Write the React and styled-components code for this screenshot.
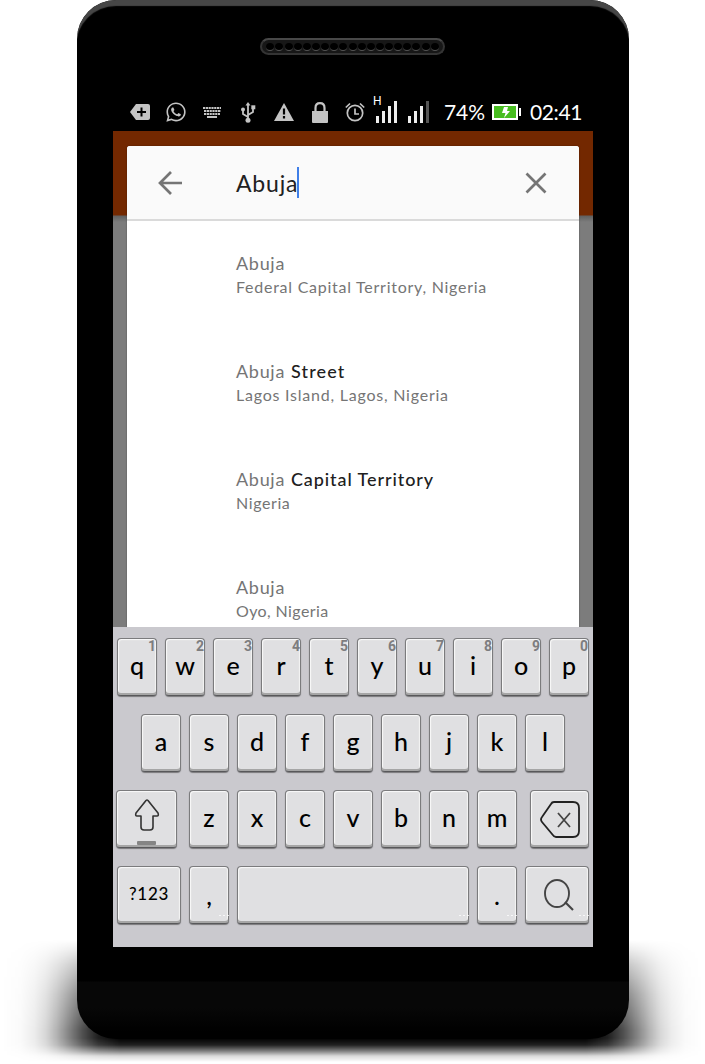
import React from "react";
import styled, { createGlobalStyle } from "styled-components";
import { FaWhatsapp } from "react-icons/fa";

const GlobalStyle = createGlobalStyle`
  * { box-sizing: border-box; }
  body { margin: 0; background: #fff; font-family: Lato, "Open Sans", sans-serif; }
  svg { display: block; flex: none; }
`;

const Stage = styled.main`
  position: relative;
  width: 705px;
  height: 1064px;
  padding-left: 77px;
  overflow: hidden;
`;

const GroundShadow = styled.div`
  position: absolute;
  left: 0;
  top: 934px;
  width: 705px;
  height: 130px;
  background: linear-gradient(to right, transparent 2px, rgba(0,0,0,.02) 20px, rgba(0,0,0,.07) 34px, rgba(0,0,0,.16) 46px, rgba(0,0,0,.3) 57px, rgba(0,0,0,.47) 68px, rgba(0,0,0,.68) 82px, rgba(0,0,0,.88) 98px, #000 120px, #000 586px, rgba(0,0,0,.88) 608px, rgba(0,0,0,.68) 624px, rgba(0,0,0,.47) 638px, rgba(0,0,0,.3) 649px, rgba(0,0,0,.16) 660px, rgba(0,0,0,.07) 672px, rgba(0,0,0,.02) 686px, transparent 703px);
  mask-image: linear-gradient(to bottom, transparent 6px, rgba(0,0,0,.13) 16px, rgba(0,0,0,.34) 30px, rgba(0,0,0,.7) 60px, #000 96px, #000 104px, rgba(0,0,0,.87) 111px, rgba(0,0,0,.5) 117px, rgba(0,0,0,.15) 122px, transparent 128px);
`;

const Phone = styled.div`
  position: relative;
  width: 552px;
  height: 1039px;
  border-radius: 39px;
  background: linear-gradient(to bottom, #000 981px, #070707 982px, #070707 1008px, #000 1032px);
  box-shadow: inset 0 7px 1px -1px #464646;
  display: flex;
  flex-direction: column;
  align-items: center;
`;

const Speaker = styled.div`
  margin: 38px 1px 0 0;
  width: 185px;
  height: 17px;
  flex: none;
  border-radius: 9px;
  border: 2px solid #343434;
  border-top-color: #484848;
  background: #171717;
  display: flex;
  justify-content: center;
  align-items: center;
  gap: 1.15px;
`;

const Hole = styled.i`
  width: 8px;
  height: 8px;
  border-radius: 50%;
  background: #000;
  border-bottom: 1px solid #555;
`;

const Screen = styled.div`
  margin-top: 38px;
  width: 480px;
  height: 854px;
  flex: none;
  display: flex;
  flex-direction: column;
`;

const StatusBar = styled.header`
  height: 38px;
  flex: none;
  padding-left: 9px;
  display: flex;
  align-items: center;
  color: #fff;
`;

const StatusSlot = styled.span`
  width: ${(p) => p.$w || 36}px;
  flex: none;
  display: flex;
  justify-content: center;
  color: #c4c4c4;
`;

const StatusText = styled.span`
  width: ${(p) => p.$w}px;
  flex: none;
  margin-left: ${(p) => p.$gap}px;
  font-size: 21px;
  line-height: 38px;
  letter-spacing: ${(p) => p.$track}px;
  white-space: nowrap;
`;

const AppArea = styled.section`
  height: 496px;
  flex: none;
  padding: 15px 14px 0;
  background: linear-gradient(to bottom, #732800 84px, #606060 85px, #7c7c7c 91px);
  overflow: hidden;
`;

const SearchCard = styled.div`
  height: 490px;
  border-radius: 3px;
  background: #fff;
  box-shadow: 0 0 2px rgba(0, 0, 0, 0.35);
  overflow: hidden;
`;

const SearchHeader = styled.div`
  height: 75px;
  padding: 0 32px 0 31px;
  background: #fafafa;
  border-bottom: 2px solid #dadada;
  display: flex;
  align-items: center;
`;

const Query = styled.span`
  flex: 1;
  margin-left: 54px;
  display: flex;
  align-items: center;
  font-size: 23px;
  letter-spacing: 0.8px;
  color: #212121;
`;

const Caret = styled.i`
  width: 2px;
  height: 31px;
  margin-left: -1.5px;
  background: #3f7fe8;
`;

const Result = styled.article`
  height: 108px;
  padding: 30px 0 0 109px;
  color: #757575;
  white-space: nowrap;
`;

const Place = styled.h2`
  margin: 0;
  font-size: 18px;
  line-height: 24px;
  font-weight: 400;
  letter-spacing: 0.7px;
  b { margin-left: 0.6px; color: #202020; font-weight: 500; letter-spacing: ${(p) => p.$track}px; }
`;

const Region = styled.p`
  margin: 0;
  font-size: 16px;
  line-height: 23px;
  letter-spacing: ${(p) => p.$track}px;
`;

const Keyboard = styled.section`
  height: 320px;
  flex: none;
  padding-top: 11px;
  background: #cac9ce;
  display: flex;
  flex-direction: column;
  gap: 18px;
`;

const KeyRow = styled.div`
  height: 58px;
  display: flex;
  gap: 8px;
  padding-left: ${(p) => p.$inset}px;
`;

const Key = styled.div`
  position: relative;
  width: ${(p) => p.$w || 40}px;
  height: 58px;
  flex: none;
  margin-left: ${(p) => p.$ml || 0}px;
  padding-bottom: ${(p) => p.$lift ?? 3}px;
  border: 1px solid #7b7b7d;
  border-bottom-color: #58585a;
  border-radius: 4px;
  background: #e0e0e2;
  box-shadow: inset 0 -2px 0 #a6a6a6, inset 1px 1px 1px #fafafa, inset -1px 0 1px #f4f4f4, 0 1px 1px rgba(0, 0, 0, 0.4);
  display: flex;
  align-items: center;
  justify-content: center;
  color: #000;
  font-size: ${(p) => p.$size || 25}px;
  font-weight: 500;
  letter-spacing: ${(p) => p.$track || 0}px;
  line-height: 1;
`;

const Alt = styled.small`
  position: absolute;
  top: 0;
  right: 0;
  font: 700 14px/15px Roboto, sans-serif;
  color: #7d7d7f;
`;

const MoreDots = styled.small`
  position: absolute;
  right: -1px;
  bottom: 7px;
  width: 10px;
  height: 1px;
  opacity: 0.75;
  background: repeating-linear-gradient(to right, #fff 0 2px, transparent 2px 4px);
`;

const SignalBars = ({ weak }) => (
  <svg width="22" height="24" viewBox="0 0 22 24" fill="#eee">
    <path d="M0 16h3v7H0zM6 11h3v12H6zM12 6h3v17h-3z" />
    <path d="M18 1h3v22h-3z" fill={weak ? "#555" : "#eee"} />
  </svg>
);

const SignalGroup = styled.span`
  position: relative;
  width: 22px;
  flex: none;
  margin-left: ${(p) => p.$gap}px;
`;

const NetType = styled.small`
  position: absolute;
  left: -3px;
  top: -5px;
  font: 12px/12px Roboto, sans-serif;
`;

const StatusIcons = () => (
  <>
    <StatusSlot>
      <svg width="20" height="16" viewBox="0 0 20 16"><path d="M6 0h12q2 0 2 2v12q0 2-2 2H6L0 8z" fill="currentColor" /><path d="M11.5 3.5v9M7 8h9" stroke="#000" strokeWidth="2" /></svg>
    </StatusSlot>
    <StatusSlot><FaWhatsapp size={22} /></StatusSlot>
    <StatusSlot>
      <svg width="18" height="12" viewBox="0 0 18 12" stroke="currentColor" strokeWidth="2"><path d="M0 2h18M1 5h17M1 8h16" strokeDasharray="2.2 .6" /><path d="M4 11h10" /></svg>
    </StatusSlot>
    <StatusSlot>
      <svg width="16" height="21" viewBox="0 0 16 21" fill="none" stroke="currentColor" strokeWidth="1.8"><path d="M8 18V2M8 15l-5-3V8M8 13l5-3V6" /><path d="M5.500 3.500 8 0l2.500 3.500z" fill="currentColor" stroke="none" /><circle cx="8" cy="18.300" r="2.500" fill="currentColor" stroke="none" /><circle cx="3" cy="7.500" r="2" fill="currentColor" stroke="none" /><path d="M11.300 3.300h4v4h-4z" fill="currentColor" stroke="none" /></svg>
    </StatusSlot>
    <StatusSlot>
      <svg width="20" height="18" viewBox="0 0 20 18"><path d="M10 0l10 18H0z" fill="currentColor" /><path d="M10 5.500v6M10 13v2.400" stroke="#000" strokeWidth="2.200" /></svg>
    </StatusSlot>
    <StatusSlot>
      <svg width="18" height="21" viewBox="0 0 18 21"><path d="M1 9h16v11q0 1-1 1H2q-1 0-1-1z" fill="currentColor" /><path d="M4.500 9.500V6q0-4.800 4.500-4.800T13.500 6v3.500" fill="none" stroke="currentColor" strokeWidth="2.200" /></svg>
    </StatusSlot>
    <StatusSlot $w={34}>
      <svg width="20" height="20" viewBox="0 0 20 20" fill="none" stroke="currentColor" strokeWidth="1.700"><circle cx="10" cy="11" r="7.700" /><path d="M10 6.500V12h4M.8 5.500 5 1.500M19.200 5.500 15 1.500" /></svg>
    </StatusSlot>
  </>
);

const BackArrow = () => (
  <svg width="24" height="24" viewBox="0 0 24 24" fill="none" stroke="#757575" strokeWidth="2.700"><path d="M24 12H2M13 1 2 12l11 11" /></svg>
);

const ClearIcon = () => (
  <svg width="22" height="22" viewBox="0 0 22 22" stroke="#757575" strokeWidth="2.700"><path d="M1.500 1.500l19 19M20.500 1.500l-19 19" /></svg>
);

const ShiftIcon = () => (
  <svg width="26" height="46" viewBox="0 0 26 46" fill="none" stroke="#333" strokeWidth="1.600" strokeLinejoin="round"><path d="M12 1.500Q13 .5 14 1.500L24 14q1 3-1 3h-4v11q0 3-3 3h-6q-3 0-3-3V17H3q-2 0-1-3z" /><rect x="3" y="42" width="19" height="4" rx="1" fill="#858585" stroke="none" /></svg>
);

const DeleteIcon = () => (
  <svg width="40" height="37" viewBox="0 0 40 37" fill="none" stroke="#222" strokeWidth="1.800"><path d="M14 1h19q6 0 6 6v23q0 6-6 6H16q-2 0-4-3L2 21q-2-2.500 0-5L11 3q1-2 3-2z" /><path d="M18 12l12 14M30 12 18 26" stroke="#444" /></svg>
);

const SearchIcon = () => (
  <svg width="30" height="32" viewBox="0 0 30 32" fill="none" stroke="#444" strokeWidth="1.900"><ellipse cx="13" cy="14.500" rx="12" ry="13.500" /><path d="M21 23l8 8" strokeWidth="2.200" /></svg>
);

const IconNudge = styled.span`
  padding: ${(p) => p.$pad};
`;

const results = [
  { region: "Federal Capital Territory, Nigeria", track: 0.74 },
  { rest: "Street", region: "Lagos Island, Lagos, Nigeria", track: 0.77, restTrack: 1.15 },
  { rest: "Capital Territory", region: "Nigeria", track: 0.6, restTrack: 0.92 },
  { region: "Oyo, Nigeria", track: 0.4 },
];

export default function App() {
  return (
    <Stage>
      <GlobalStyle />
      <GroundShadow />
      <Phone>
        <Speaker>{Array.from({ length: 19 }, (_, i) => <Hole key={i} />)}</Speaker>
        <Screen>
          <StatusBar>
            <StatusIcons />
            <SignalGroup $gap={4}><NetType>H</NetType><SignalBars /></SignalGroup>
            <SignalGroup $gap={10}><SignalBars weak /></SignalGroup>
            <StatusText $w={42} $gap={14} $track={-0.1}>74%</StatusText>
            <IconNudge $pad="0 0 0 6px">
              <svg width="29" height="16" viewBox="0 0 29 16"><rect x="1" y="1" width="24" height="14" fill="#48bd20" stroke="#fff" strokeWidth="2" /><path d="M27 4h2v8h-2z" fill="#fff" /><path d="M12 3h4l-1 4h3l-6 7 1.500-5H10z" fill="#fff" /></svg>
            </IconNudge>
            <StatusText $w={52} $gap={9} $track={-0.4}>02:41</StatusText>
          </StatusBar>
          <AppArea>
            <SearchCard>
              <SearchHeader>
                <BackArrow />
                <Query>Abuja<Caret /></Query>
                <ClearIcon />
              </SearchHeader>
              {results.map((r) => (
                <Result key={r.region}>
                  <Place $track={r.restTrack}>Abuja {r.rest && <b>{r.rest}</b>}</Place>
                  <Region $track={r.track}>{r.region}</Region>
                </Result>
              ))}
            </SearchCard>
          </AppArea>
          <Keyboard>
            <KeyRow $inset={4}>
              {[..."qwertyuiop"].map((c, i) => <Key key={c}>{c}<Alt>{(i + 1) % 10}</Alt></Key>)}
            </KeyRow>
            <KeyRow $inset={28}>{[..."asdfghjkl"].map((c) => <Key key={c}>{c}</Key>)}</KeyRow>
            <KeyRow $inset={3}>
              <Key $w={61} $lift={0}><IconNudge $pad="5px 0 0"><ShiftIcon /></IconNudge></Key>
              {[..."zxcvbnm"].map((c, i) => <Key key={c} $ml={i === 0 ? 4 : 0}>{c}</Key>)}
              <Key $w={59} $ml={5} $lift={0}><IconNudge $pad="1px 0 0 1px"><DeleteIcon /></IconNudge></Key>
            </KeyRow>
            <KeyRow $inset={4}>
              <Key $w={64} $size={17} $track={0.7}>?123</Key>
              <Key $lift={0}>,<MoreDots /></Key>
              <Key $w={232}><MoreDots /></Key>
              <Key $lift={0}>.<MoreDots /></Key>
              <Key $w={64} $lift={0}><IconNudge $pad="0 0 0 4px"><SearchIcon /></IconNudge><MoreDots /></Key>
            </KeyRow>
          </Keyboard>
        </Screen>
      </Phone>
    </Stage>
  );
}
